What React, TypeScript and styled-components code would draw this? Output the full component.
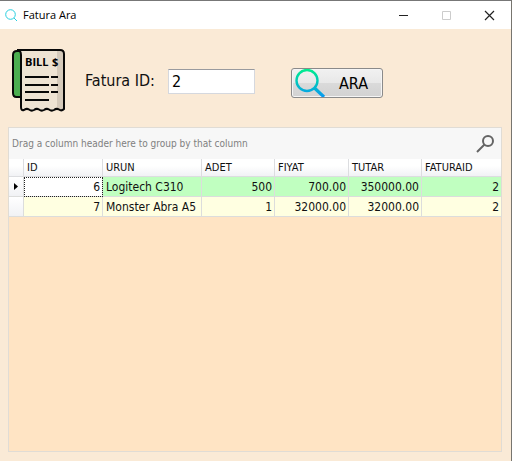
import React, { useState } from "react";
import styled, { createGlobalStyle } from "styled-components";

const GlobalStyle = createGlobalStyle`
  * { box-sizing: border-box; }
  body {
    margin: 0;
    background: #faead6;
    color: #111;
    font-family: "DejaVu Sans Condensed", Tahoma, "Noto Sans", sans-serif;
    font-size: 12px;
  }
`;

const Window = styled.div`
  display: flex;
  flex-direction: column;
  min-height: 100vh;
  border-top: 1px solid #777;
  border-right: 1px solid #77756f;
  background: #faead6;
`;

const TitleBar = styled.header`
  display: flex;
  align-items: center;
  height: 28px;
  padding-left: 4px;
  background: #fff;
`;

const Title = styled.h1`
  flex: 1;
  margin: 0 0 0 4px;
  font: 400 11px/16px "Open Sans", "Noto Sans", sans-serif;
  color: #000;
`;

const WindowButton = styled.button`
  display: grid;
  place-items: center;
  width: 43px;
  height: 28px;
  padding: 0;
  border: 0;
  background: transparent;
  color: #222;
  &:disabled { color: #ccc; }
`;

const SearchForm = styled.form`
  display: flex;
  align-items: center;
  height: 98px;
  padding: 6px 12px 0;
`;

const Label = styled.label`
  width: 83px;
  margin-left: 19px;
  font-size: 16px;
  line-height: 20px;
  white-space: nowrap;
`;

const TextBox = styled.input`
  width: 87px;
  height: 25px;
  padding: 0 3px;
  border: 1px solid #d5d8de;
  border-top-color: #999a9e;
  background: #fff;
  font: inherit;
  font-size: 16px;
  color: #000;
  outline: 0;
`;

const SearchButton = styled.button`
  display: flex;
  align-items: center;
  gap: 13px;
  width: 92px;
  height: 30px;
  margin: 4px 0 0 36px;
  padding: 0 0 0 3px;
  border: 1px solid #8a8a8a;
  border-radius: 3px;
  background: linear-gradient(#f1f1f1, #e8e8e8 49%, #dadada 50%, #d2d2d2);
  box-shadow: inset 0 0 0 1px #f5f5f5;
  font: inherit;
  font-size: 16px;
  color: #000;
`;

const GridPanel = styled.section`
  flex: 1;
  margin: 0 9px 9px 8px;
  border: 1px solid #e0dcd5;
  background: #ffe4c4;
`;

const GroupBar = styled.div`
  display: flex;
  align-items: center;
  justify-content: space-between;
  height: 31px;
  padding: 0 7px 0 3px;
  background: #f7f7f7;
  color: #808080;
  font-size: 10px;
`;

const FindButton = styled.button`
  display: grid;
  padding: 0;
  border: 0;
  background: transparent;
  color: #646464;
`;

const Table = styled.table`
  width: 100%;
  table-layout: fixed;
  border-collapse: separate;
  border-spacing: 0;
`;

const Column = styled.col<{ $width: number }>`
  width: ${(p) => p.$width}px;
`;

const HeaderCell = styled.th`
  height: 18px;
  padding: 0 3px;
  border-right: 1px solid #dcdde0;
  border-bottom: 1px solid #dcdde0;
  background: linear-gradient(#fff 40%, #f1f2f5);
  font-size: 11px;
  font-weight: 400;
  line-height: 16px;
  text-align: left;
  &:last-child { border-right: 0; }
`;

const Row = styled.tr<{ $selected: boolean }>`
  background: ${(p) => (p.$selected ? "#c0ffc0" : "#ffffe1")};
`;

const Cell = styled.td<{ $align?: "left" | "right"; $focused?: boolean }>`
  height: 20px;
  padding: 0 2px 0 3px;
  border-right: 1px solid #dcdddc;
  border-bottom: 1px solid #dcdddc;
  background: ${(p) => (p.$focused ? "#fff" : "transparent")};
  outline: ${(p) => (p.$focused ? "1px dotted #222" : "none")};
  outline-offset: -1px;
  line-height: 16px;
  text-align: ${(p) => p.$align ?? "right"};
  white-space: nowrap;
  &:last-child { border-right: 0; }
`;

const IndicatorCell = styled.td`
  padding: 0 0 0 5px;
  border-right: 1px solid #dcdddc;
  border-bottom: 1px solid #dcdddc;
  background: linear-gradient(#fff, #f1f2f5);
`;

const Icon = styled.svg`
  display: block;
  flex: none;
`;

function BillIcon() {
  return (
    <Icon width="54" height="64" viewBox="0 0 54 64" aria-hidden="true">
      <path d="M9 2H5Q1 2 1 6V44Q1 48 4.500 48H9Z" fill="#4cae50" stroke="#080808" strokeWidth="2" />
      <path d="M5 1H48Q52 1 52 5V60Q49.500 62.500 47 60.500Q44.500 59 42 61Q39.500 62.500 37 60.500Q34.500 59 32 61Q29.500 62.500 27 60.500Q24.500 59 22 61Q19.500 62.500 17 60.500Q14.500 59 12 61Q9 62 9 58V6Q9 1 5 1Z" fill="#eee3d3" />
      <path d="M45 2H48Q51 2 51 5V60Q48 61 45 60Z" fill="#d5cabb" />
      <path d="M5 1H48Q52 1 52 5V60Q49.500 62.500 47 60.500Q44.500 59 42 61Q39.500 62.500 37 60.500Q34.500 59 32 61Q29.500 62.500 27 60.500Q24.500 59 22 61Q19.500 62.500 17 60.500Q14.500 59 12 61Q9 62 9 58V6Q9 1 5 1" fill="none" stroke="#080808" strokeWidth="2" strokeLinejoin="round" />
      <text x="13" y="17" fontFamily="Open Sans, sans-serif" fontSize="11" fontWeight="700">BILL</text>
      <text x="40" y="17" fontFamily="Open Sans, sans-serif" fontSize="11" fontWeight="700">$</text>
      <path d="M13 28H37M39 28H46M13 36H37M39 36H46M13 43H37M39 43H46M13 51H37" stroke="#080808" strokeWidth="2" />
    </Icon>
  );
}

function SearchIcon() {
  return (
    <Icon width="31" height="28" viewBox="0 0 31 28" fill="none" aria-hidden="true">
      <defs>
        <linearGradient id="lens" x1="0" y1="0" x2="0" y2="28" gradientUnits="userSpaceOnUse">
          <stop stopColor="#00ee8c" />
          <stop offset="1" stopColor="#0799f3" />
        </linearGradient>
      </defs>
      <circle cx="12" cy="11.500" r="10.500" stroke="url(#lens)" strokeWidth="2.400" />
      <path d="M19.500 19L29 28" stroke="url(#lens)" strokeWidth="3.200" />
    </Icon>
  );
}

const columns = [
  { name: "ID", width: 79 },
  { name: "URUN", width: 99 },
  { name: "ADET", width: 73 },
  { name: "FIYAT", width: 74 },
  { name: "TUTAR", width: 73 },
  { name: "FATURAID", width: 79 },
];

const rows = [
  ["6", "Logitech C310", "500", "700.00", "350000.00", "2"],
  ["7", "Monster Abra A5", "1", "32000.00", "32000.00", "2"],
];

export default function App() {
  const [invoiceId, setInvoiceId] = useState("2");

  return (
    <>
      <GlobalStyle />
      <Window>
        <TitleBar>
          <Icon width="15" height="15" viewBox="0 0 15 15" fill="none" stroke="#28cfe0" aria-hidden="true">
            <circle cx="6.5" cy="6.5" r="4.8" />
            <path d="M10 10L13 13" />
          </Icon>
          <Title>Fatura Ara</Title>
          <WindowButton type="button" aria-label="Minimize">
            <Icon width="11" height="11" stroke="currentColor"><path d="M1 5.5H10" /></Icon>
          </WindowButton>
          <WindowButton type="button" aria-label="Maximize" disabled>
            <Icon width="11" height="11" fill="none" stroke="currentColor"><path d="M1.5 1.5H9.500V9.500H1.500Z" /></Icon>
          </WindowButton>
          <WindowButton type="button" aria-label="Close">
            <Icon width="11" height="11" stroke="currentColor" strokeWidth="1.2"><path d="M1 1L10 10M10 1L1 10" /></Icon>
          </WindowButton>
        </TitleBar>
        <SearchForm onSubmit={(e) => e.preventDefault()}>
          <BillIcon />
          <Label htmlFor="invoice-id">Fatura ID:</Label>
          <TextBox id="invoice-id" value={invoiceId} onChange={(e) => setInvoiceId(e.target.value)} />
          <SearchButton type="submit">
            <SearchIcon />
            ARA
          </SearchButton>
        </SearchForm>
        <GridPanel>
          <GroupBar>
            Drag a column header here to group by that column
            <FindButton type="button" aria-label="Find">
              <Icon width="18" height="18" viewBox="0 0 18 18" fill="none" stroke="currentColor" strokeWidth="2">
                <circle cx="12" cy="6" r="5" />
                <path d="M8.500 9.500L1 17" />
              </Icon>
            </FindButton>
          </GroupBar>
          <Table>
            <colgroup>
              <Column $width={15} />
              {columns.map((c) => <Column key={c.name} $width={c.width} />)}
            </colgroup>
            <thead>
              <tr>
                <HeaderCell aria-label="Row indicator" />
                {columns.map((c) => <HeaderCell key={c.name} scope="col">{c.name}</HeaderCell>)}
              </tr>
            </thead>
            <tbody>
              {rows.map((row, r) => (
                <Row key={row[0]} $selected={r === 0}>
                  <IndicatorCell>
                    {r === 0 && <Icon width="4" height="7"><path d="M0 0L4 3.500L0 7Z" /></Icon>}
                  </IndicatorCell>
                  {row.map((value, c) => (
                    <Cell key={columns[c].name} $align={c === 1 ? "left" : "right"} $focused={r === 0 && c === 0}>
                      {value}
                    </Cell>
                  ))}
                </Row>
              ))}
            </tbody>
          </Table>
        </GridPanel>
      </Window>
    </>
  );
}
